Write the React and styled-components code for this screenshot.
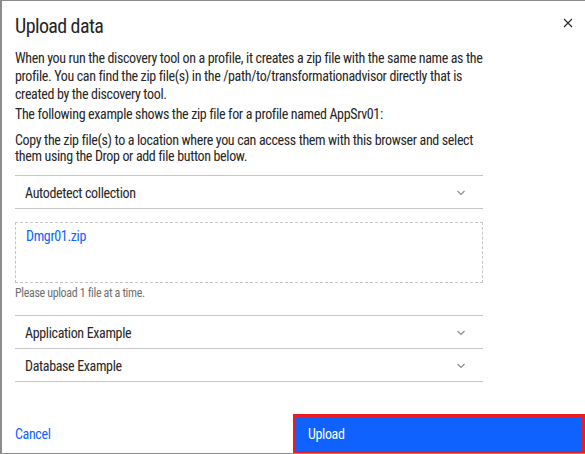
import React from 'react';
import styled, { createGlobalStyle } from 'styled-components';

const GlobalStyle = createGlobalStyle`
    html, body {
        margin: 0;
        padding: 0;
        background: #8c8c8c;
        overflow: hidden;
    }

    body {
        font-family: "Roboto Condensed", "Liberation Sans Narrow", "Liberation Sans", sans-serif;
        color: #161616;
        letter-spacing: -0.35px;
    }
`;

const Modal = styled.div`
    margin: 1px 0 0 2px;
    width: 583px;
    height: 452px;
    background: #ffffff;
    display: flex;
    flex-direction: column;
`;

const Header = styled.header`
    display: flex;
    justify-content: space-between;
    align-items: flex-start;
    padding: 12px 12px 0 13px;
`;

const Title = styled.h2`
    margin: 0;
    font-size: 20px;
    line-height: 26px;
    font-weight: 400;
    letter-spacing: -0.6px;
    color: #262626;
`;

const CloseButton = styled.button`
    border: 0;
    background: none;
    padding: 0;
    margin-top: 5px;
    width: 10px;
    height: 10px;
    display: flex;
    cursor: pointer;
`;

const Body = styled.div`
    flex: 1;
    padding: 10px 13px 0 13px;
`;

const Paragraph = styled.p`
    margin: 0 0 ${(p) => p.$gap || 0}px;
    max-width: 475px;
    font-size: 14px;
    line-height: ${(p) => p.$lh || 18}px;
    color: #262626;
`;

const Accordion = styled.ul`
    list-style: none;
    margin: ${(p) => p.$top || 0}px 0 0;
    padding: 0;
    width: 468px;
    border-top: 1px solid #c6c6c6;
`;

const AccordionItem = styled.li`
    display: flex;
    align-items: center;
    justify-content: space-between;
    height: 32px;
    padding: 1px 17px 0 10px;
    box-sizing: border-box;
    height: 33px;
    border-bottom: 1px solid #c6c6c6;
    font-size: 14px;
    color: #262626;
`;

const DropZone = styled.div`
    margin-top: 13px;
    width: 468px;
    height: 61px;
    box-sizing: border-box;
    border: 1px dashed #c6c6c6;
    padding: 3px 10px;
`;

const FileLink = styled.a`
    color: #0f62fe;
    font-size: 14px;
    line-height: 16px;
    text-decoration: none;
`;

const Helper = styled.div`
    margin-top: 3px;
    font-size: 12px;
    line-height: 14px;
    color: #6f6f6f;
`;

const Footer = styled.footer`
    display: grid;
    grid-template-columns: 291px 1fr;
    height: 40px;
`;

const GhostButton = styled.button`
    border: 0;
    background: #ffffff;
    padding: 0 13px;
    text-align: left;
    font-family: inherit;
    letter-spacing: inherit;
    font-size: 14px;
    color: #0f62fe;
    cursor: pointer;
`;

const PrimaryButton = styled.button`
    margin-top: 1px;
    height: 40px;
    border: 3px solid #ec1c24;
    background: #0f62fe;
    padding: 0 12px;
    text-align: left;
    font-family: inherit;
    letter-spacing: inherit;
    font-size: 14px;
    color: #ffffff;
    cursor: pointer;
`;

function Chevron() {
    return (
        <svg width="10" height="6" viewBox="0 0 10 6">
            <polyline points="1.5,1 5,4.5 8.5,1" fill="none" stroke="#8d8d8d" strokeWidth="1.2" />
        </svg>
    );
}

function CloseIcon() {
    return (
        <svg width="10" height="10" viewBox="0 0 10 10">
            <path d="M1 1 L9 9 M9 1 L1 9" stroke="#262626" strokeWidth="1.1" />
        </svg>
    );
}

function App() {
    return (
        <>
            <GlobalStyle />
            <Modal>
                <Header>
                    <Title>Upload data</Title>
                    <CloseButton aria-label="Close">
                        <CloseIcon />
                    </CloseButton>
                </Header>
                <Body>
                    <Paragraph $gap={2}>
                        When you run the discovery tool on a profile, it creates a zip file with the same name as the
                        profile. You can find the zip file(s) in the /path/to/transformationadvisor directly that is
                        created by the discovery tool.
                    </Paragraph>
                    <Paragraph $gap={9}>
                        The following example shows the zip file for a profile named AppSrv01:
                    </Paragraph>
                    <Paragraph $lh={16}>
                        Copy the zip file(s) to a location where you can access them with this browser and select
                        them using the Drop or add file button below.
                    </Paragraph>
                    <Accordion $top={11}>
                        <AccordionItem>
                            Autodetect collection
                            <Chevron />
                        </AccordionItem>
                    </Accordion>
                    <DropZone>
                        <FileLink href="#">Dmgr01.zip</FileLink>
                    </DropZone>
                    <Helper>Please upload 1 file at a time.</Helper>
                    <Accordion $top={15}>
                        <AccordionItem>
                            Application Example
                            <Chevron />
                        </AccordionItem>
                        <AccordionItem>
                            Database Example
                            <Chevron />
                        </AccordionItem>
                    </Accordion>
                </Body>
                <Footer>
                    <GhostButton>Cancel</GhostButton>
                    <PrimaryButton>Upload</PrimaryButton>
                </Footer>
            </Modal>
        </>
    );
}

export default App;
